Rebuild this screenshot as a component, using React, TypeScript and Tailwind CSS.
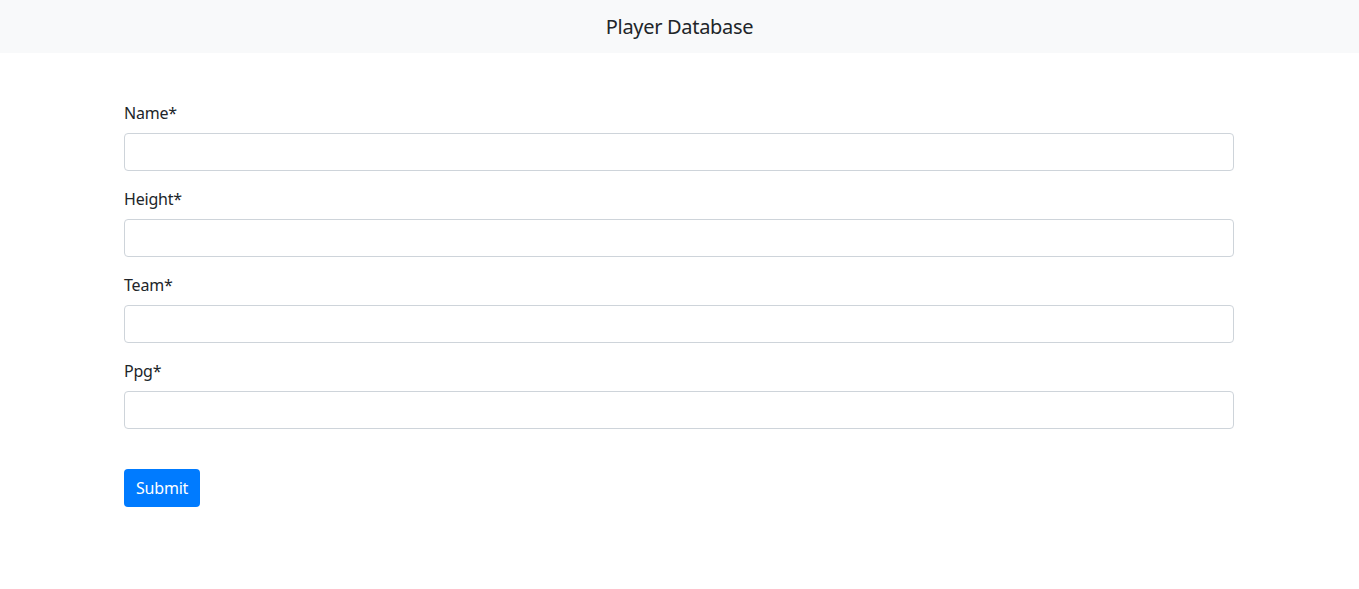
const fields = ['Name*', 'Height*', 'Team*', 'Ppg*'];

export default function App() {
  return (
    <div className="min-h-screen bg-white text-[#212529]" style={{ fontFamily: '"Segoe UI", "Noto Sans", "Liberation Sans", sans-serif' }}>
      <header className="flex h-[53px] items-center justify-center bg-[#f8f9fa]">
        <h1 className="text-[20px] leading-[24px] tracking-[-0.3px]">Player Database</h1>
      </header>
      <form className="ml-[124px] mt-12 w-[1110px]" onSubmit={e => e.preventDefault()}>
        {fields.map(label => (
          <div key={label} className="mb-4">
            <label className="mb-2 block text-[16px] leading-[24px] tracking-[-0.2px]">{label}</label>
            <input
              type="text"
              className="block h-[38px] w-full rounded border border-[#ced4da] bg-white px-3 text-[16px] outline-none"
            />
          </div>
        ))}
        <button
          type="submit"
          className="mt-6 h-[38px] rounded bg-[#007bff] px-3 text-[16px] leading-[24px] tracking-[-0.2px] text-white"
        >
          Submit
        </button>
      </form>
    </div>
  );
}
